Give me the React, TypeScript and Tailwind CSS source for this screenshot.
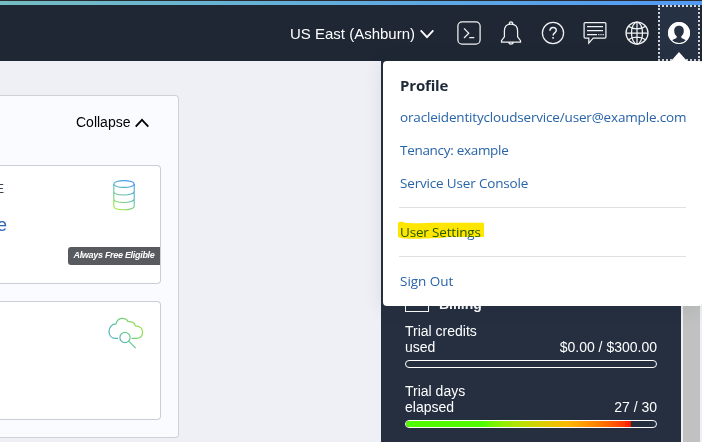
import React from "react";

function Chevron({ up = false, className }: { up?: boolean; className: string }) {
  return (
    <svg width="14" height="10" viewBox="0 0 14 10" fill="none" className={className}>
      <path d={up ? "M.7 8.6 7 1.8l6.3 6.8" : "M.7 1.3 7 8.1l6.3-6.8"} stroke="currentColor" strokeWidth="1.8" />
    </svg>
  );
}

function HeaderIcon({ children }: { children: React.ReactNode }) {
  return (
    <div className="flex h-14 w-[42px] shrink-0 items-center justify-center">
      <svg width="26" height="26" viewBox="0 0 26 26" fill="none" stroke="#f1f2f3" strokeWidth="1.25">
        {children}
      </svg>
    </div>
  );
}

function Header() {
  return (
    <header className="h-[61px] bg-[#1e2733]">
      <div className="h-px bg-[#2b2b32]" />
      <div className="h-1 bg-linear-to-r from-[#74bdc2] to-[#5299f5]" />
      <div className="flex h-14 items-center justify-end pr-0.5 text-white">
        <span className="mt-0.5 whitespace-nowrap text-[15px] leading-5">US East (Ashburn)</span>
        <Chevron className="mr-[14px] ml-[5px] mt-0.5" />
        <HeaderIcon>
          <rect x="1.9" y="1.9" width="22.2" height="22.2" rx="4.2" />
          <path d="m8 8.4 4.8 4.8L8 18M13.3 17.7h5" />
        </HeaderIcon>
        <HeaderIcon>
          <path d="M3.5 22v-1.3l2.9-3.8V11c0-4.5 2.6-7 6.6-7s6.6 2.5 6.6 7v5.9l2.9 3.8V22ZM11.2 4c0-3 3.6-3 3.6 0M10.8 22c0 2.8 4.4 2.8 4.4 0" />
        </HeaderIcon>
        <HeaderIcon>
          <circle cx="13" cy="13" r="10.6" />
          <path d="M10 10.8c0-4.6 6.3-4.3 6.3-.5 0 2.5-3.2 2.6-3.2 5.2M13.1 17v1.7" strokeWidth="1.5" />
        </HeaderIcon>
        <HeaderIcon>
          <path d="M3.1 2.5h19.8c.6 0 1 .4 1 1v13.6c0 .6-.4 1-1 1H11.2l-4.4 5v-5H3.1c-.6 0-1-.4-1-1V3.5c0-.6.4-1 1-1Z" />
          <path d="M5 6.5h16M5 10.5h16M5 14.5h10" />
          <path d="M16.2 14.5H22" strokeDasharray="1.2 1" />
        </HeaderIcon>
        <HeaderIcon>
          <circle cx="13" cy="13" r="11" />
          <ellipse cx="13" cy="13" rx="5.5" ry="11" />
          <path d="M2 13h22M13 2v22M4.5 6.2c4.5 3.5 12.5 3.5 17 0M4.5 19.8c4.5-3.5 12.5-3.5 17 0" />
        </HeaderIcon>
        <div className="flex h-14 w-[42px] shrink-0 items-center justify-center border-2 border-dotted border-[#d0d3d7] bg-[#263143]">
          <svg width="26" height="26" viewBox="0 0 26 26">
            <circle cx="13" cy="13" r="11" fill="white" />
            <path
              d="M13 5.8c-3.1 0-4.9 2.1-4.8 5.1.1 2.4 1 4.2 2.5 5.3v1.3c0 1-3.6 1.5-4.6 2.9 1.6 1.7 3.9 2.6 6.9 2.6s5.3-.9 6.9-2.6c-1-1.4-4.6-1.9-4.6-2.9v-1.3c1.5-1.1 2.4-2.9 2.5-5.3.1-3-1.7-5.1-4.8-5.1Z"
              fill="#263143"
            />
            <circle cx="13" cy="13" r="10.5" fill="none" stroke="white" />
          </svg>
        </div>
      </div>
    </header>
  );
}

function DatabaseIcon() {
  return (
    <svg width="22" height="31" viewBox="0 0 22 31" fill="none">
      <defs>
        <linearGradient id="database" x1="20" y1="2" x2="2" y2="29" gradientUnits="userSpaceOnUse">
          <stop stopColor="#4597f2" />
          <stop offset=".5" stopColor="#62bfb0" />
          <stop offset="1" stopColor="#a3e93b" />
        </linearGradient>
      </defs>
      <g stroke="url(#database)" strokeWidth="1.1">
        <ellipse cx="11" cy="4" rx="10.2" ry="3.4" />
        <path d="M.8 4v22.3c0 4.6 20.4 4.6 20.4 0V4M.8 11.5c0 4.6 20.4 4.6 20.4 0M.8 19c0 4.6 20.4 4.6 20.4 0" />
      </g>
    </svg>
  );
}

function CloudSearchIcon() {
  return (
    <svg width="36" height="32" viewBox="0 0 36 32" fill="none">
      <defs>
        <linearGradient id="cloud" x1="2" y1="23" x2="31" y2="4" gradientUnits="userSpaceOnUse">
          <stop stopColor="#4ba8d0" />
          <stop offset=".4" stopColor="#62c59d" />
          <stop offset="1" stopColor="#98e345" />
        </linearGradient>
      </defs>
      <g stroke="url(#cloud)" strokeWidth="1.25">
        <path d="M10 21.3H7.7C3.6 21.3 1 18.3 1 14.4c0-4.2 3-7.5 7-7.5C9 3.2 11.3 1.4 14.5 1.4c2.5 0 4.6 1.2 5.7 3.3 3.4-.6 6.4 1.1 7.2 4.1 4 .1 7.2 2.3 7.2 6.1 0 4-2.5 6.4-6.5 6.4h-4.5" />
        <circle cx="17" cy="20.5" r="5.1" />
        <path d="m20.7 24.1 7 7" />
      </g>
    </svg>
  );
}

function LeftContent() {
  return (
    <main className="w-[381px] shrink-0 bg-[#eff0f5] pt-[34px]">
      <section className="h-[343px] w-[179px] rounded-r border border-l-0 border-[#cdd2d9] bg-[#fafbff] pt-4">
        <div className="flex h-5 items-center pl-[76px] text-sm text-black">
          <span>Collapse</span>
          <Chevron up className="ml-[5px] mt-0.5" />
        </div>
        <div className="mt-[33px] flex h-[119px] w-[161px] flex-col overflow-hidden rounded-r border border-l-0 border-[#c9ced6] bg-white">
          <div className="flex h-[81px] justify-between pr-[25px]">
            <div className="w-3">
              <div className="-ml-1 mt-[15px] text-xs leading-4 text-[#3a4554]">E</div>
              <div className="-ml-[3px] mt-4 text-lg leading-6 text-[#2f67b8]">e</div>
            </div>
            <div className="mt-[14px]"><DatabaseIcon /></div>
          </div>
          <div className="ml-auto flex h-[18px] w-[92px] items-center justify-center whitespace-nowrap rounded-l-[3px] bg-[#575b60] pb-px text-[9px] font-bold italic tracking-[-0.3px] text-white">
            Always Free Eligible
          </div>
        </div>
        <div className="mt-[17px] flex h-[119px] w-[161px] justify-end rounded-r border border-l-0 border-[#c9ced6] bg-white pr-4 pt-[15px]">
          <CloudSearchIcon />
        </div>
      </section>
    </main>
  );
}

function Usage({ label, value, percent }: { label: React.ReactNode; value: string; percent: number }) {
  return (
    <div className="h-[60px]">
      <div className="flex h-8 items-end justify-between text-sm leading-4">
        <div>{label}</div>
        <div>{value}</div>
      </div>
      <div className="mt-[5px] h-2 overflow-hidden rounded-full border border-white">
        <div
          className="h-full bg-linear-to-r from-[#52fa00] from-35% via-[#ffb400] via-73% to-[#ff0800]"
          style={{ width: `${percent}%` }}
        />
      </div>
    </div>
  );
}

function Sidebar() {
  return (
    <aside className="w-[300px] shrink-0 bg-[#252f40] pl-6 pr-6 pt-[231px] text-white">
      <div className="flex h-5 items-end">
        <div className="h-5 w-6 border border-white" />
        <span className="ml-[10px] -mb-0.5 text-sm font-bold leading-5">Billing</span>
      </div>
      <div className="mt-[11px]">
        <Usage label={<>Trial credits<br />used</>} value="$0.00 / $300.00" percent={0} />
        <Usage label={<>Trial days<br />elapsed</>} value="27 / 30" percent={90} />
      </div>
    </aside>
  );
}

function MenuLink({ children }: { children: React.ReactNode }) {
  return <a className="relative block h-[33px] whitespace-nowrap leading-[33px] text-[#2864a8]">{children}</a>;
}

function ProfileMenu() {
  return (
    <div className="absolute left-[383px] top-[61px] h-[245px] w-[319px] rounded bg-white pl-[17px] pr-4 pt-2 font-['Open_Sans','Noto_Sans',sans-serif] text-[13.5px] tracking-[-0.17px] shadow-[0_2px_20px_rgba(30,50,50,0.12)]">
      <svg className="absolute right-[15px] -top-[9px]" width="16" height="9" viewBox="0 0 16 9">
        <path d="m8 0 8 9H0Z" fill="white" />
      </svg>
      <h2 className="h-8 text-[15px] font-bold leading-8 text-[#1d2938]">Profile</h2>
      <MenuLink>oracleidentitycloudservice/user@example.com</MenuLink>
      <MenuLink><span className="tracking-[-0.3px]">Tenancy: example</span></MenuLink>
      <MenuLink>Service User Console</MenuLink>
      <div className="-ml-px mt-[7px] h-[50px] border-y border-[#e0e0e0] pl-px pt-2">
        <div className="relative">
          <MenuLink>User Settings</MenuLink>
          <svg className="absolute -left-[3px] -top-0.5 mix-blend-multiply" width="88" height="30" viewBox="0 0 88 30">
            <path d="m1 8.5 4-1 3 1.3c10 1 22-.2 33-.1h46V23l-37 .1-5 .8c-14-.2-24 1.2-39 .7L1 23Z" fill="#ffe600" />
          </svg>
        </div>
      </div>
      <div className="pt-2 tracking-[-0.02px]"><MenuLink>Sign Out</MenuLink></div>
    </div>
  );
}

export default function App() {
  return (
    <div className="relative h-[442px] w-[702px] overflow-hidden bg-[#eff0f5] font-['Liberation_Sans',Arial,sans-serif]">
      <Header />
      <div className="flex h-[381px]">
        <LeftContent />
        <Sidebar />
        <div className="w-[21px] border-x-2 border-[#eff0f5] bg-[#c1c1c1]" />
      </div>
      <ProfileMenu />
    </div>
  );
}
